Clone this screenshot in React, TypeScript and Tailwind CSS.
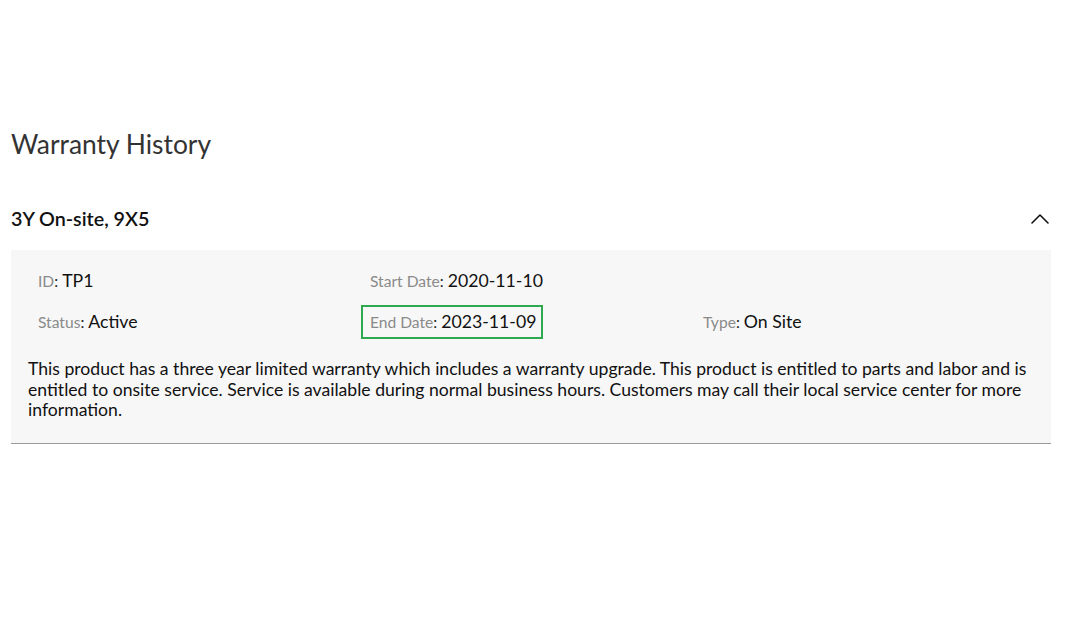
import { ChevronUp } from "lucide-react"

interface Field {
  label: string
  value: string
  highlight?: boolean
}

const rows: Field[][] = [
  [
    { label: "ID", value: "TP1" },
    { label: "Start Date", value: "2020-11-10" },
  ],
  [
    { label: "Status", value: "Active" },
    { label: "End Date", value: "2023-11-09", highlight: true },
    { label: "Type", value: "On Site" },
  ],
]

function FieldItem({ field }: { field: Field }) {
  const inner = (
    <span className="whitespace-nowrap">
      <span className="text-[15.6px] text-[#8a8a8a]">{field.label}</span>
      <span className="text-[15.6px] text-[#222]">: </span>
      <span className="text-[17.7px] text-[#111]">{field.value}</span>
    </span>
  )
  if (field.highlight) {
    return (
      <div className="-my-[5px] -ml-[9px] w-fit border-2 border-[#2ea94f] py-[3px] pl-[7px] pr-[5px]">
        {inner}
      </div>
    )
  }
  return <div>{inner}</div>
}

export default function App() {
  return (
    <div className="min-h-[635px] bg-white px-[11px] pt-[128px] font-['Lato','Liberation_Sans',sans-serif] text-[#111]">
      <h1 className="text-[26.4px] leading-[32px] text-[#333]">Warranty History</h1>

      <div className="mt-[28px] mr-[3px] flex h-[62px] items-center justify-between">
        <h2 className="text-[19.7px] font-semibold">3Y On-site, 9X5</h2>
        <ChevronUp className="mr-[-5px] h-[32px] w-[32px] text-[#111]" strokeWidth={1.2} />
      </div>

      <div className="mr-[3px] border-b border-[#9a9a9a] bg-[#f7f7f7] pt-[19px] pb-[22px] pl-[27px] pr-[16px]">
        <div className="flex flex-col gap-[17px]">
          {rows.map((row, i) => (
            <div key={i} className="grid h-[24px] grid-cols-[332px_333px_1fr] items-center leading-[24px]">
              {row.map((f) => (
                <FieldItem key={f.label} field={f} />
              ))}
            </div>
          ))}
        </div>
        <p className="-ml-[10px] mt-[25px] text-[17.6px] leading-[20.5px]">
          This product has a three year limited warranty which includes a warranty upgrade. This product is entitled
          to parts and labor and is entitled to onsite service. Service is available during normal business hours.
          Customers may call their local service center for more information.
        </p>
      </div>
    </div>
  )
}
